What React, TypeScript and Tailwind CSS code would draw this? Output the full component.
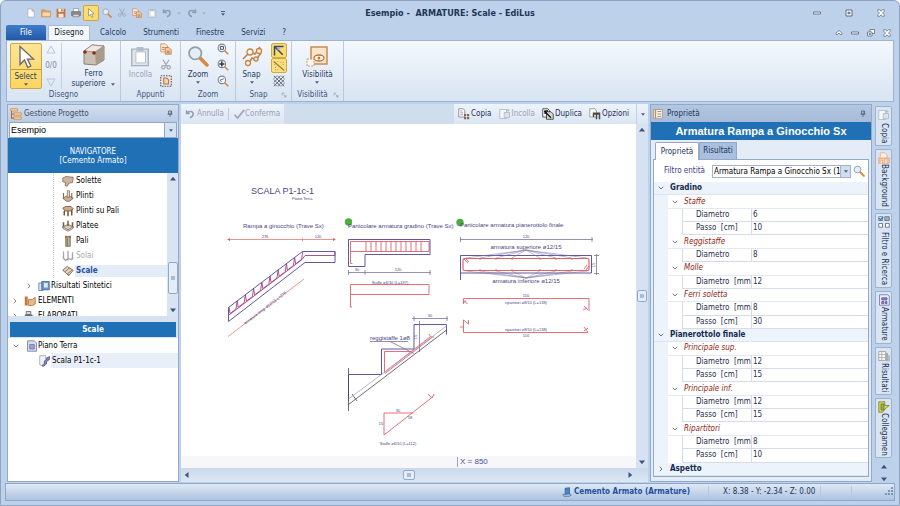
import type { ReactNode } from "react";
import { ChevronDown, ChevronRight } from "lucide-react";

const menuTabs = ["Calcolo", "Strumenti", "Finestre", "Servizi", "?"];

interface TreeNode { label: string; icon: string; muted?: boolean; selected?: boolean }

const elements: TreeNode[] = [
  { label: "Solette", icon: "slab" },
  { label: "Plinti", icon: "footing" },
  { label: "Plinti su Pali", icon: "piles" },
  { label: "Platee", icon: "raft" },
  { label: "Pali", icon: "pile" },
  { label: "Solai", icon: "floor", muted: true },
  { label: "Scale", icon: "stairs", selected: true },
];

interface Row { kind: "section" | "group" | "value"; label: string; value?: string; closed?: boolean }

const rows: Row[] = [
  { kind: "section", label: "Gradino" },
  { kind: "group", label: "Staffe" },
  { kind: "value", label: "Diametro", value: "6" },
  { kind: "value", label: "Passo  [cm]", value: "10" },
  { kind: "group", label: "Reggistaffe" },
  { kind: "value", label: "Diametro", value: "8" },
  { kind: "group", label: "Molle" },
  { kind: "value", label: "Diametro  [mm", value: "12" },
  { kind: "group", label: "Ferri soletta" },
  { kind: "value", label: "Diametro  [mm", value: "8" },
  { kind: "value", label: "Passo  [cm]", value: "30" },
  { kind: "section", label: "Pianerottolo finale" },
  { kind: "group", label: "Principale sup." },
  { kind: "value", label: "Diametro  [mm", value: "12" },
  { kind: "value", label: "Passo  [cm]", value: "15" },
  { kind: "group", label: "Principale inf." },
  { kind: "value", label: "Diametro  [mm", value: "12" },
  { kind: "value", label: "Passo  [cm]", value: "15" },
  { kind: "group", label: "Ripartitori" },
  { kind: "value", label: "Diametro  [mm", value: "8" },
  { kind: "value", label: "Passo  [cm]", value: "10" },
  { kind: "section", label: "Aspetto", closed: true },
];

const glyphs: Record<string, ReactNode> = {
  page: <path d="M3 1.5h6.5L13 5v9.5H3zM9.5 1.5V5H13" fill="#fff" stroke="#9aa5b5" />,
  folder: <><path d="M1 3h5l1.5 2H15v9H1z" fill="#e8a25c" stroke="#c07a35" /><path d="M3 7h12l-1 6H2z" fill="#fbd7a4" /></>,
  save: <><path d="M1 1h14v14H1z" fill="#c8743c" /><path d="M4 1h8v5H4z" fill="#fff" /><path d="M4 9h8v6H4z" fill="#f6e7da" /><path d="M8.5 2h2v3h-2z" fill="#7c4a2c" /></>,
  print: <><path d="M4 1h8v5H4z" fill="#fff" stroke="#888" /><path d="M1 6h14v6H1z" fill="#8e8e90" stroke="#5b5d62" /><path d="M3 10h10v4H3z" fill="#d5d8dc" stroke="#6b6d72" /></>,
  cursor: <path d="M4 1v12l3-3 2.2 5 2-1-2.2-4.6H13z" fill="#fff" stroke="#6e6a68" strokeWidth=".9" />,
  lens: <><path d="M9 9l5.5 5.5" stroke="#d88a3c" strokeWidth="2.6" strokeLinecap="round" /><circle cx="6" cy="6" r="4.500" fill="#e3eef7" stroke="#95a0ac" strokeWidth="1.3" /></>,
  cut: <path d="M4 1l5.5 9M12 1L6.5 10M6.3 10a2.2 2.2 0 1 0 .1.2M9.7 10a2.2 2.2 0 1 1-.1.2" fill="none" stroke="#9fa9b7" strokeWidth="1.6" />,
  copy: <><path d="M1 1h6l3 3v8H1z" fill="#fbe6d5" stroke="#c98a5b" /><path d="M7 6h5l3 3v6H7z" fill="#f5c9a2" stroke="#b8703c" /><path d="M3 6h3M3 8.5h3M9 11h4M9 13h4" stroke="#a35d31" /></>,
  paste: <><path d="M2 3h12v12H2z" fill="#dfe5ee" stroke="#a6b0bf" /><path d="M5 5h7v8H5z" fill="#fff" stroke="#b3bcc9" strokeWidth=".7" /><path d="M5.5 1.5h5v3h-5z" fill="#b4bdca" /></>,
  undo: <path d="M2.5 2v5h5M3 6.5C6 3 13 3 13 8c0 3-2 5-5 6" fill="none" stroke="#8f9db1" strokeWidth="2.4" />,
  redo: <path d="M13.5 2v5h-5M13 6.5C10 3 3 3 3 8c0 3 2 5 5 6" fill="none" stroke="#8f9db1" strokeWidth="2.4" />,
  check: <path d="M2 9l4 4.5L15 2.5" fill="none" stroke="#a2aab6" strokeWidth="2.4" />,
  select: <><path d="M1 1h14v14H1z" fill="none" stroke="#5d5044" strokeWidth="1.5" strokeDasharray="2 1.5" /><path d="M5 4h4l2.5 2.5V12H5z" fill="#f7d3ad" stroke="#b8703c" strokeWidth="1.4" /></>,
  zoomWin: <><path d="M10 10l5 5" stroke="#d8863c" strokeWidth="2.2" /><circle cx="6.5" cy="6.5" r="5" fill="#f3f6fa" stroke="#7d8794" strokeWidth="1.4" /><path d="M4.5 4.5h4v4h-4z" fill="none" stroke="#444c58" strokeWidth="1.3" /></>,
  zoomAll: <><path d="M10 10l5 5" stroke="#d8863c" strokeWidth="2.2" /><circle cx="6.5" cy="6.5" r="5" fill="#f3f6fa" stroke="#7d8794" strokeWidth="1.4" /><path d="M6.5 3v7M3 6.5h7" stroke="#333b47" strokeWidth="2" /></>,
  zoomPrev: <><path d="M10 10l5 5" stroke="#d8863c" strokeWidth="2.2" /><circle cx="6.5" cy="6.5" r="5" fill="#f3f6fa" stroke="#7d8794" strokeWidth="1.4" /><path d="M4 7l5-2M4 7l2 2" stroke="#5f6a7a" strokeWidth="1.3" fill="none" /></>,
  snapEnd: <><path d="M2 14V2h12M2 2l11 11" fill="none" stroke="#3a4d70" strokeWidth="2" /><path d="M6 2l4 3-4 2z" fill="#9bb5d8" /></>,
  snapMid: <><path d="M1 2l14 12" stroke="#8c7a3c" strokeWidth="1.4" /><path d="M10 3h1M13 6h1M3 10h1M6 13h1M6 2h1M2 6h1M13 3h1M3 13h1" stroke="#8c7a3c" strokeWidth="1.2" /></>,
  snapGrid: <path d="M1 1l14 14M6 1l9 9M11 1l4 4M1 6l9 9M1 11l4 4M15 1L1 15M10 1L1 10M5 1L1 5M15 6l-9 9M15 11l-4 4" stroke="#5c6675" strokeWidth="1.2" />,
  project: <><path d="M1 1h9v3H1zM5 6.5h10v3H5zM5 12h10v3H5z" fill="#fbd5aa" stroke="#cf8440" /><path d="M2 4v9.5h3M2 8h3" fill="none" stroke="#b16c31" strokeWidth="1.4" /></>,
  slab: <path d="M1 4l4-2 10 1-1 7-5 1-2 4-3-1 1-4-4-1z" fill="#cbb69d" stroke="#7b6550" />,
  footing: <><path d="M1 11l5-3h4l5 3-5 4H6z" fill="#c9b297" stroke="#6f5a45" /><path d="M7 1h3v9H7z" fill="#ddd0c0" stroke="#8b7560" /><path d="M2 4v7M13 4v7" stroke="#8a6a48" strokeWidth="1.5" /></>,
  piles: <><path d="M1 4l4-2h7l3 3-3 3H4z" fill="#cfa98a" stroke="#70492e" /><path d="M3 8v6M8 8v7M13 6v8" stroke="#7a5439" strokeWidth="2" /></>,
  raft: <><path d="M1 9l7 4 7-4-7-3z" fill="#dbcdb8" stroke="#6c5a48" /><path d="M2 3v6M8 1v7M14 3v6" stroke="#765c44" strokeWidth="2" /><path d="M1 9v2l7 4 7-4V9" fill="none" stroke="#6c5a48" /></>,
  pile: <><path d="M5 2h6v13H5z" fill="#b7b295" stroke="#60583e" /><path d="M4 1h3v3H4zM9 1h3v3H9z" fill="#b26b45" /><path d="M7 4v11" stroke="#827b5e" strokeWidth="1.5" /></>,
  floor: <path d="M2 2v10M8 1v13M14 3v10M1 10l4 4 3-3 4 2 3-3" fill="none" stroke="#a8a8a8" strokeWidth="1.8" />,
  stairs: <><path d="M1 7l6-5 8 5-6 7z" fill="#e3d6c2" stroke="#77624c" strokeWidth="1.2" /><path d="M4 9l6-5M7 12l6-5M9 14v-2" stroke="#77624c" strokeWidth="1" /></>,
  results: <><path d="M1 4h6v10H1z" fill="#dfe6ef" stroke="#63738a" /><path d="M5 2h10v11H5z" fill="#6c9bd2" stroke="#2f5c94" /><path d="M8 4h5v6H8z" fill="#dcebfa" /></>,
  shapes: <><path d="M1 2h4v12H1z" fill="#c9793f" /><path d="M6 6h5l4-3v9l-4 2H6z" fill="#e8b888" stroke="#b26a36" /></>,
  docs: <><path d="M1 6h10v6H1z" fill="#6a6d75" /><path d="M3 2h6v4H3z" fill="#d6dae0" stroke="#555" /><path d="M9 8h4l2 2v5H9z" fill="#fff" stroke="#666" /></>,
  floorPlan: <><path d="M2 1h9l3 3v11H2z" fill="#d6dcec" stroke="#67739a" /><path d="M5 6h6v6H5z" fill="#9aa6cb" stroke="#67739a" /></>,
  stairItem: <><path d="M1 1h8v10l-4 4-4-2z" fill="#f5f6fb" stroke="#8f96b4" /><path d="M4 14l3-3V8l3-2V4l4-2v4l-4 3v3l-4 3z" fill="#7e80bb" stroke="#55568f" /></>,
  copyDark: <><path d="M1 1h6l2 2v9H1z" fill="#fff" stroke="#777" /><path d="M3 4h3M3 6.5h4M3 9h4" stroke="#888" /><path d="M8 8h3v3H8zM12 8h3v3h-3zM8 12h3v3H8zM12 12h3v3h-3z" fill="#826b5e" /></>,
  pasteGray: <><path d="M1 2h9v12H1z" fill="#f5f7fa" stroke="#a9b1bd" /><path d="M7 6h7v7H7z" fill="#dde2ea" stroke="#a9b1bd" /><path d="M12 1v4M10 3h4" stroke="#a9b1bd" /></>,
  duplicate: <><path d="M1 1h7l2 3v8H1z" fill="#fff" stroke="#222" /><path d="M6 5h6l3 3v7H6z" fill="#d8d8d8" stroke="#222" /><path d="M3 4l9 9M4 8V4h4" fill="none" stroke="#111" strokeWidth="1.7" /></>,
  options: <><path d="M1 1h7l2 3v8H1z" fill="#fff" stroke="#888" /><path d="M5 6h10v3H5zM9 9h2v6H9zM13 9h2v6h-2zM5 9h2v3H5z" fill="#504842" /></>,
  propList: <><path d="M1 1h14v14H1z" fill="#fdf1df" stroke="#9a8468" /><path d="M4 1v14" stroke="#c58d4b" strokeWidth="2" /><path d="M7 4h6M7 8h6M7 12h6" stroke="#8a8a8a" strokeWidth="1.4" /></>,
  background: <><path d="M1 8h14v7H1z" fill="#f7cdb0" stroke="#df9b70" /><path d="M3 15v-4h3v4M9 15V9h3v6M3 1h6l3 3v4H3z" fill="#fdf0e7" stroke="#e0a57e" /></>,
  filter: <><path d="M1 1h5v5H1zM1 10h5v5H1zM10 10h5v5h-5z" fill="#fff" stroke="#555e6c" /><path d="M1.5 3l2 2L7 1" fill="none" stroke="#2b7cb8" strokeWidth="1.6" /><path d="M9 1h6v5H9z" fill="#9db2cb" stroke="#556377" /></>,
  rebar: <><path d="M2 1h11l2 2v12H2z" fill="#eeecfa" stroke="#6c69ab" /><path d="M5 5h7v3H5zM5 10h3v3H5zM10 10h2v3h-2z" fill="#8a86c6" stroke="#5a559c" /></>,
  table: <><path d="M1 2h9v12H1z" fill="#f6f6f2" stroke="#9a9a8d" /><path d="M1 6h9M1 10h9M5 2v12" stroke="#aaa" /><path d="M11 4h2v11h-2zM14 7h1.5v8H14z" fill="#8f9aa5" /></>,
  link: <><path d="M1 1h8v5h6l-5 4-4 5H1z" fill="#e6d64a" stroke="#6f7630" /><path d="M4 4h4v8H4z" fill="#8cb457" stroke="#56752e" /></>,
  pin: <path d="M5 2h6v6H5zM3 8.5h10M8 9v5M10 2v6" fill="none" stroke="#51617e" strokeWidth="1.6" />,
  min: <path d="M1 6h14v4H1z" fill="#fff" stroke="#5d6a80" strokeWidth="1.8" />,
  max: <path d="M2 2h12v12H2zM6 6.5h4v3H6z" fill="#fff" stroke="#5d6a80" strokeWidth="2" />,
  restore: <><path d="M6 1h9v8H6z" fill="#fff" stroke="#5d6a80" strokeWidth="1.6" /><path d="M1 6h9v8H1zM4 9h3v2H4z" fill="#fff" stroke="#5d6a80" strokeWidth="1.6" /></>,
  close: <path d="M1.5 1.5h4L8 4.5l2.500-3h4v3L11 8l3.5 3.5v3h-4L8 11.500l-2.500 3h-4v-3L5 8 1.500 4.500z" fill="#fff" stroke="#5d6a80" strokeWidth="1.5" />,
  up: <path d="M2 8l6-5 6 5v3h-3l-3-3-3 3H2z" fill="#fff" stroke="#5d6a80" strokeWidth="1.5" />,
  building: <><path d="M5 2l7-1v11l-7 2z" fill="#4a83c4" stroke="#234f87" /><path d="M1 12l11-1 3 2-4 2H3z" fill="#a8c4e4" stroke="#3b659a" /></>,
  dialog: <path d="M3 9V3h6M7 7l6 6M13 8v5H8" fill="none" stroke="#8796ae" strokeWidth="1.8" />,
};

function Glyph({ name, className = "h-2.5 w-2.5" }: { name: string; className?: string }) {
  return <svg viewBox="0 0 16 16" aria-hidden="true" className={`shrink-0 ${className}`}>{glyphs[name]}</svg>;
}

function Caret({ className = "text-[#4b5f80]" }: { className?: string }) {
  return <svg viewBox="0 0 6 4" aria-hidden="true" className={`h-[3px] w-1 shrink-0 ${className}`}><path d="M0 0h6L3 4z" fill="currentColor" /></svg>;
}

function Arrow({ dir, label }: { dir: "up" | "down" | "left" | "right"; label: string }) {
  const d = { up: "M0 6h8L4 1z", down: "M0 2h8L4 7z", left: "M6 0v8L1 4z", right: "M2 0v8l5-4z" }[dir];
  return (
    <button aria-label={label} className="flex h-3 w-3 shrink-0 items-center justify-center">
      <svg viewBox="0 0 8 8" className="h-1.5 w-1.5"><path d={d} fill="#3f5478" /></svg>
    </button>
  );
}

function TitleBar() {
  const quick = ["page", "folder", "save", "print", "cursor", "lens", "cut", "copy", "paste", "undo", "redo"];
  return (
    <header className="relative flex h-6 items-center pr-1.5 pl-[18px]">
      <div className="flex items-center">
        {quick.map((name) => (
          <div key={name} className="flex items-center">
            <button
              aria-label={name}
              className={name === "cursor"
                ? "flex h-4 w-4 items-center justify-center rounded-xs border border-[#d0a540] bg-[#fbdc70]"
                : "flex h-4 w-[15px] items-center justify-center"}
            >
              <Glyph name={name} />
            </button>
            {(name === "undo" || name === "redo") && <Caret className="mx-[3px] text-[#a4b3ca]" />}
          </div>
        ))}
        <button aria-label="Personalizza" className="ml-3 flex flex-col items-center gap-px">
          <span className="h-px w-1 bg-[#4b5f80]" />
          <Caret />
        </button>
      </div>
      <h1 className="absolute inset-x-0 text-center text-[9px] font-bold whitespace-pre text-[#1d3557]">Esempio -  ARMATURE: Scale - EdiLus</h1>
      <div className="ml-auto flex items-center gap-6">
        <button aria-label="Riduci"><Glyph name="min" className="h-2 w-2" /></button>
        <button aria-label="Ingrandisci"><Glyph name="max" className="h-2 w-2" /></button>
        <button aria-label="Chiudi" className="mr-1"><Glyph name="close" className="h-2 w-2" /></button>
      </div>
    </header>
  );
}

function MenuBar() {
  return (
    <nav className="flex h-[15px] items-stretch pr-1">
      <button className="ml-px w-10 rounded-t-xs bg-linear-to-b from-[#3f7cc8] to-[#2359a8] text-white">File</button>
      <button className="ml-0.5 w-[42px] rounded-t-xs border border-b-0 border-[#a9bdd8] bg-[#f4f8fd] text-[#101d33]">Disegno</button>
      <div className="flex items-center gap-[17px] pl-2.5 text-[#1e3a63]">
        {menuTabs.map((tab) => <button key={tab}>{tab}</button>)}
      </div>
      <div className="ml-auto flex items-center gap-2">
        <button aria-label="Comprimi"><Glyph name="up" className="h-2 w-2" /></button>
        <button aria-label="Riduci finestra"><Glyph name="min" className="h-2 w-2" /></button>
        <button aria-label="Ripristina finestra"><Glyph name="restore" className="h-2 w-2" /></button>
        <button aria-label="Chiudi finestra"><Glyph name="close" className="h-2 w-2" /></button>
      </div>
    </nav>
  );
}

function RibbonGroup({ title, width, dialog, children }: { title: string; width: string; dialog?: boolean; children: ReactNode }) {
  return (
    <section className={`flex flex-col border-r border-[#b9c9de] ${width}`}>
      <div className="flex min-h-0 flex-1 justify-center gap-2 pt-0.5">{children}</div>
      <div className="flex h-3 items-center justify-center text-[#3b5680]">
        <span className={dialog ? "ml-auto" : ""}>{title}</span>
        {dialog && <button aria-label={`Opzioni ${title}`} className="mr-1 ml-auto"><Glyph name="dialog" className="h-1.5 w-1.5" /></button>}
      </div>
    </section>
  );
}

function Ribbon() {
  return (
    <div className="mx-px flex h-[62px] shrink-0 border border-[#9fb3ce] bg-linear-to-b from-[#f4f8fd] to-[#d8e4f2] text-[#1e3a63]">
      <RibbonGroup title="Disegno" width="w-[114px]">
        <button className="flex h-[46px] w-8 flex-col items-center rounded-xs border border-[#cfa746] bg-linear-to-b from-[#fde594] to-[#fbd55e]">
          <Glyph name="cursor" className="mt-px h-6 w-6" />
          <span className="flex w-full flex-1 flex-col items-center border-t border-[#c09a3e] leading-[13px]">Select<Caret /></span>
        </button>
        <div className="-ml-1 flex w-4 flex-col items-center justify-between border-r border-[#c3d0e2] py-0.5 pr-1 text-[#7b8ca8]">
          <svg viewBox="0 0 10 9" className="h-[9px] w-2.5"><path d="M1 8h8L5 1z" fill="none" stroke="#b9c4d4" /></svg>
          <span>0/0</span>
          <svg viewBox="0 0 10 9" className="h-[9px] w-2.5"><path d="M1 1h8L5 8z" fill="none" stroke="#b9c4d4" /></svg>
        </div>
        <button className="flex w-12 flex-col items-center">
          <svg viewBox="0 0 24 24" className="h-6 w-6 shrink-0">
            <path d="M2 8l8-6 12 1v14l-8 5-12-1z" fill="#cbbfb2" stroke="#8e8074" />
            <path d="M13 9l9-6v14l-8 5z" fill="#a89a8c" />
            <path d="M2 8l8-6 12 1-9 6z" fill="#efe8e0" stroke="#8e8074" strokeWidth=".7" />
            <circle cx="3" cy="9" r="1.8" fill="#8d2a20" /><circle cx="12" cy="10" r="1.8" fill="#8d2a20" />
          </svg>
          <span className="mt-0.5 leading-[10px]">Ferro</span>
          <span className="flex items-center gap-1.5 leading-[10px]">superiore<Caret /></span>
        </button>
      </RibbonGroup>
      <RibbonGroup title="Appunti" width="w-[60px]">
        <button className="flex flex-col items-center text-[#98a5b8]">
          <Glyph name="paste" className="mt-0.5 h-[22px] w-[22px]" />
          <span className="mt-0.5">Incolla</span>
        </button>
        <div className="flex flex-col justify-between pb-0.5">
          <button aria-label="Copia elementi" className="h-3"><Glyph name="copy" className="h-3 w-3" /></button>
          <button aria-label="Taglia elementi" className="h-3"><Glyph name="cut" className="h-3 w-3" /></button>
          <button aria-label="Seleziona area" className="h-3"><Glyph name="select" className="h-3 w-3" /></button>
        </div>
      </RibbonGroup>
      <RibbonGroup title="Zoom" width="w-[55px]">
        <button className="flex flex-col items-center">
          <Glyph name="lens" className="mt-0.5 h-[22px] w-[22px]" />
          <span className="mt-0.5">Zoom</span>
          <Caret />
        </button>
        <div className="flex flex-col justify-between pb-0.5">
          <button aria-label="Zoom finestra" className="h-3"><Glyph name="zoomWin" className="h-3 w-3" /></button>
          <button aria-label="Zoom estensione" className="h-3"><Glyph name="zoomAll" className="h-3 w-3" /></button>
          <button aria-label="Zoom precedente" className="h-3"><Glyph name="zoomPrev" className="h-3 w-3" /></button>
        </div>
      </RibbonGroup>
      <RibbonGroup title="Snap" width="w-[56px]" dialog>
        <button className="flex flex-col items-center">
          <svg viewBox="0 0 22 22" className="mt-0.5 h-[22px] w-[22px]">
            <path d="M2 14L9 7l5 2 5-7M7 19l4-6 4 2 5-7" fill="none" stroke="#b98152" strokeWidth="1.5" />
            <g fill="#fff3df" stroke="#c58342" strokeWidth="1.3"><circle cx="9" cy="7" r="3" /><circle cx="18" cy="6" r="2.5" /><circle cx="7" cy="18" r="2.5" /><circle cx="15" cy="14" r="2" /></g>
          </svg>
          <span className="mt-0.5">Snap</span>
          <Caret />
        </button>
        <div className="flex flex-col items-center">
          <button aria-label="Snap estremi" className="flex h-[15px] w-4 items-center justify-center rounded-xs border border-[#d1a943] bg-[#fbdb6b]"><Glyph name="snapEnd" className="h-3 w-3" /></button>
          <button aria-label="Snap medio" className="flex h-[15px] w-4 items-center justify-center rounded-xs border border-[#d1a943] bg-[#fbe07d]"><Glyph name="snapMid" className="h-3 w-3" /></button>
          <button aria-label="Snap griglia" className="flex h-4 items-center"><Glyph name="snapGrid" className="h-3 w-3" /></button>
        </div>
      </RibbonGroup>
      <RibbonGroup title="Visibilità" width="w-[52px]" dialog>
        <button className="flex flex-col items-center">
          <svg viewBox="0 0 22 22" className="mt-0.5 h-[22px] w-[22px]">
            <path d="M5 2h16v17H5z" fill="#fbe4cd" stroke="#c98a52" strokeWidth="1.5" />
            <ellipse cx="13" cy="13" rx="5" ry="3" fill="#fff" stroke="#bd7434" strokeWidth="1.3" />
            <circle cx="13" cy="13" r="1.5" fill="#bd7434" />
            <path d="M1 14h7v7H1z" fill="#fdf5ec" stroke="#b9a184" strokeDasharray="2 1" />
          </svg>
          <span className="mt-0.5">Visibilità</span>
          <Caret />
        </button>
      </RibbonGroup>
    </div>
  );
}

function ProjectPanel() {
  return (
    <aside className="flex w-[172px] shrink-0 flex-col border border-[#93a9c7] bg-[#d5e2f1]">
      <div className="flex h-[17px] shrink-0 items-center gap-0.5 bg-linear-to-b from-[#d3dfef] to-[#b9cbe3] px-0.5 text-[#3d4f6d]">
        <Glyph name="project" className="h-3 w-3" />
        <h2>Gestione Progetto</h2>
        <button aria-label="Blocca pannello" className="ml-auto pr-0.5"><Glyph name="pin" className="h-2 w-2" /></button>
      </div>
      <div className="relative mx-px h-4 shrink-0 border border-[#8fa6c5] bg-white">
        <select aria-label="Progetto" className="h-full w-full appearance-none pl-px font-['Liberation_Sans',sans-serif] text-[9px] text-black">
          <option>Esempio</option>
        </select>
        <span className="pointer-events-none absolute inset-y-0 right-0 flex w-3 items-center justify-center border-l border-[#8fa6c5] bg-[#d5e2f1]"><Caret /></span>
      </div>
      <div className="flex h-[35px] shrink-0 flex-col items-center justify-center bg-[#2070b5] leading-[9px] text-white">
        <span>NAVIGATORE</span>
        <span>[Cemento Armato]</span>
      </div>
      <div className="flex h-[143px] shrink-0 bg-white">
        <ul className="flex flex-1 flex-col overflow-hidden text-black">
          {elements.map((node) => (
            <li key={node.label} className="ml-[45px] flex h-[15px] shrink-0 items-center border-l border-dotted border-[#c9ced6] pl-2">
              <Glyph name={node.icon} className="h-3 w-3" />
              <a
                href="#"
                className={node.selected
                  ? "ml-px flex h-3 flex-1 items-center bg-[#e3ecf7] pl-px font-bold text-[#1f4f9f]"
                  : node.muted ? "ml-0.5 text-[#a9a9a9]" : "ml-0.5"}
              >
                {node.label}
              </a>
            </li>
          ))}
          <li className="flex h-[15px] shrink-0 items-center gap-px pl-[17px]">
            <ChevronRight className="mr-1 h-2 w-2 text-[#444]" />
            <Glyph name="results" className="h-3 w-3" />
            <a href="#">Risultati Sintetici</a>
          </li>
          <li className="flex h-[15px] shrink-0 items-center gap-px pl-[3px]">
            <ChevronRight className="mr-1 h-2 w-2 text-[#444]" />
            <Glyph name="shapes" className="h-3 w-3" />
            <a href="#" className="ml-px">ELEMENTI</a>
          </li>
          <li className="flex h-[15px] shrink-0 items-center gap-px pl-[3px]">
            <ChevronRight className="mr-1 h-2 w-2 text-[#444]" />
            <Glyph name="docs" className="h-3 w-3" />
            <a href="#" className="ml-px">ELABORATI</a>
          </li>
        </ul>
        <div className="flex w-[11px] shrink-0 flex-col items-center bg-[#d8e4f2]">
          <Arrow dir="up" label="Scorri su" />
          <div className="mt-auto flex h-8 w-[10px] items-center justify-center rounded-xs border border-[#92a9c9] bg-[#e4edf8]"><span className="h-1 w-1 bg-[#a9bbd5]" /></div>
          <span className="h-2.5" />
          <Arrow dir="down" label="Scorri giù" />
        </div>
      </div>
      <h2 className="mx-0.5 mt-1.5 h-[15px] shrink-0 bg-[#2070b5] text-center leading-[15px] font-bold text-white">Scale</h2>
      <ul className="mt-px flex-1 bg-white text-black">
        <li className="flex h-[15px] items-center pl-1">
          <ChevronDown className="mr-1.5 h-2 w-2 text-[#444]" />
          <Glyph name="floorPlan" className="h-3 w-3" />
          <a href="#">Piano Terra</a>
        </li>
        <li className="flex h-[15px] items-center pl-[31px]">
          <Glyph name="stairItem" className="h-3 w-3" />
          <a href="#" className="flex h-[15px] flex-1 items-center bg-[#e8eff9] pl-px">Scala P1-1c-1</a>
        </li>
      </ul>
    </aside>
  );
}

function Drawing() {
  const rungs = Array.from({ length: 12 }, (_, i) => 366 + i * 5);
  const fan = [466, 480, 496, 512, 540, 556, 572, 587];
  const web = Array.from({ length: 9 }, (_, i) => {
    const x = 229 + i * 8.2;
    const y = 307 - i * 6.2;
    return `L${x + 1} ${y + 6.5}L${x + 7} ${y + 2}L${x + 8.2} ${y - 6.2}`;
  }).join("");
  return (
    <svg viewBox="181 124 454 332" preserveAspectRatio="xMinYMin meet" role="img" aria-label="Scala P1-1c-1" className="min-h-0 w-full flex-1 bg-white font-['Liberation_Sans',sans-serif]" fill="none">
      <circle cx="348.5" cy="222" r="3.7" fill="#4cae3c" />
      <circle cx="460" cy="222.5" r="3.7" fill="#4cae3c" />
      <g stroke="#e2606a" strokeWidth=".9">
        <path d="M228 239.5h107M302.5 238v3M228 336.5l76-57.5" stroke="#e88a83" />
        <path d="M227 239.5l3-1.5v3zM336 239.500l-3-1.5v3z" fill="#e2606a" stroke="none" />
        <path d="M350.5 263.5h2M350.5 263.500v-22H429v10h-78.5" />
        {rungs.map((x) => <path key={x} d={`M${x} 241.5v10`} />)}
        <path d="M352 307h-1.5v-22.500H429v10h-78.5" />
        <rect x="463" y="258.5" width="126" height="12" rx="1.5" strokeWidth="1.2" />
        <path d="M464 259l4 4M466 259l3 3M587 265l-3 4M589 266l-3 4M480 258v2M496 258v2M512 258v2M540 258v2M556 258v2M572 258v2M480 269v2M496 269v2M512 269v2M540 269v2M556 269v2M572 269v2" />
        <path d="M463.5 304v-5.5H589V311M463.5 300l4 4M463 303l3-2M584 306l4 4M583 310l4-2" />
        <path d="M463.5 320v12.5H588M463.5 320l5 4v-4M460 327h3M584 327l4 5M584 331l4-3" />
        <path d="M384.5 373v-21.5h27M385 373.5l47-36M386 371l44-34M429 334l2 3h3" />
        <path d="M413 413h-29v22l48.5-38M428 394l4 4 2-4" />
      </g>
      <g stroke="#a13d82" strokeWidth=".9">
        <path d={`M229 307${web}`} />
        <path d="M229 315L302 259.500 305 255.500h30M303 251.500h32v4" />
      </g>
      <g stroke="#5e58a5" strokeWidth="1">
        <path d="M228.5 321.5v-14l74-56H335v11h-30z" />
        <path d="M348.5 239.5H430v15h-65v12h-16.500z" />
        <path d="M460.5 280v-24.5h131v17.5h-131" />
        <path d="M348.5 401v-26.5h33V349H414v-24.5h32.500v10" />
      </g>
      <g stroke="#83709f" strokeWidth=".8">
        <path d="M348 272.5h83M348.500 270v5M365 270v5M430 270v5M460 239.500h133M460.500 237v5M592 237v5M596.500 254v21M594 255.500h5M594 273.500h5M412 318.500h36M414 316v5M447 316v5M419.500 321v31M370 341.500h38M390 341.500l24 12" />
        <g strokeWidth=".5">{fan.map((x) => <path key={x} d={`M526 250L${x} 258M526 278L${x} 271`} />)}</g>
      </g>
      <path d="M348.5 404.5L446.5 330M348.500 368v43M352 394l5 7" stroke="#494554" strokeWidth=".8" />
      <path d="M348.5 399L446.5 326" stroke="#a6a2b6" strokeWidth=".8" />
      <g fill="#4a4484">
        <text x="251" y="194" fontSize="9">SCALA P1-1c-1</text>
        <text x="292" y="200" fontSize="4">Piano Terra</text>
        <g fontSize="6">
          <text x="243" y="228">Rampa a ginocchio (Trave Sx)</text>
          <text x="348" y="228">Particolare armatura gradino (Trave Sx)</text>
          <text x="460" y="227">Particolare armatura pianerottolo finale</text>
          <text x="526" y="249" textAnchor="middle">armatura superiore ø12/15</text>
          <text x="526" y="283" textAnchor="middle">armatura inferiore ø12/15</text>
          <text x="370" y="340">reggistaffe 1ø8</text>
        </g>
        <g fontSize="4" textAnchor="middle">
          <text x="265" y="238">276</text>
          <text x="318" y="238">120</text>
          <text x="357" y="271">30</text>
          <text x="398" y="271">120</text>
          <text x="390" y="284">Staffe ø6/10 (L=197)</text>
          <text x="526" y="238">120</text>
          <text x="526" y="297">110</text>
          <text x="526" y="304">ripartitori ø8/10 (L=138)</text>
          <text x="526" y="331">ripartitori ø8/10 (L=138)</text>
          <text x="526" y="337">110</text>
          <text x="430" y="317">30</text>
          <text x="398" y="412">30</text>
          <text x="381" y="425">15</text>
          <text x="410" y="419">58</text>
          <text x="398" y="445">Staffe ø6/10 (L=112)</text>
          <text x="595" y="265" transform="rotate(-90 595 265)">15</text>
          <text x="417" y="337" transform="rotate(-90 417 337)">15</text>
          <text x="266" y="309" transform="rotate(-37 266 309)">armatura long. ø12/15 L=278</text>
        </g>
      </g>
    </svg>
  );
}

function Workspace() {
  return (
    <main className="flex min-w-0 flex-1 flex-col">
      <div className="flex h-5 shrink-0 items-stretch justify-between bg-[#cfdded]">
        <div className="flex items-center bg-linear-to-b from-[#edf3fa] to-[#dbe6f3] px-1 text-[#98a2b2]">
          <button className="flex items-center gap-0.5"><Glyph name="undo" />Annulla</button>
          <button className="ml-1 flex items-center border-l border-[#bccade] pl-1"><Glyph name="check" className="h-3 w-3" />Conferma</button>
        </div>
        <div className="flex items-center gap-[7px] bg-linear-to-b from-[#edf3fa] to-[#dbe6f3] pl-1 text-[#1e2f5e]">
          <button className="flex items-center gap-px"><Glyph name="copyDark" className="h-3 w-3" />Copia</button>
          <button className="flex items-center gap-px text-[#98a2b2]"><Glyph name="pasteGray" className="h-3 w-3" />Incolla</button>
          <button className="flex items-center gap-px"><Glyph name="duplicate" className="h-3 w-3" />Duplica</button>
          <button className="flex items-center gap-px"><Glyph name="options" className="h-3 w-3" />Opzioni</button>
          <button aria-label="Altro" className="flex h-full w-3 items-center justify-center border-l border-[#c2cfe1]"><Caret /></button>
        </div>
      </div>
      <div className="flex min-h-0 flex-1">
        <div className="flex min-w-0 flex-1 flex-col bg-white">
          <Drawing />
          <div className="flex h-3 shrink-0 items-center bg-[#f7f7fa] pl-[276px] font-['Liberation_Sans',sans-serif] text-[#4a4f99]">
            <output className="border-l border-[#9a9ecb] pl-0.5 leading-[10px]">X = 850</output>
          </div>
        </div>
        <div className="flex w-3 shrink-0 flex-col items-center justify-between bg-[#d5e2f1]">
          <Arrow dir="up" label="Scorri disegno su" />
          <div className="flex h-3 w-2.5 items-center justify-center rounded-xs border border-[#92a9c9] bg-[#e4edf8]"><span className="h-1 w-1 bg-[#a9bbd5]" /></div>
          <Arrow dir="down" label="Scorri disegno giù" />
        </div>
      </div>
      <div className="flex h-3.5 shrink-0 items-center justify-between bg-linear-to-b from-[#c9d9ec] to-[#dce7f4] pr-3">
        <Arrow dir="left" label="Scorri disegno a sinistra" />
        <div className="flex h-2.5 w-3 items-center justify-center rounded-xs border border-[#92a9c9] bg-[#e4edf8]"><span className="h-1 w-1 bg-[#a9bbd5]" /></div>
        <Arrow dir="right" label="Scorri disegno a destra" />
      </div>
    </main>
  );
}

function PropertyRow({ row }: { row: Row }) {
  if (row.kind === "section") {
    return (
      <tr className="bg-[#edf3fa]">
        <td className="border-b border-[#dbe4ef]">
          {row.closed ? <ChevronRight className="mx-auto h-2 w-2 text-[#333]" /> : <ChevronDown className="mx-auto h-2 w-2 text-[#333]" />}
        </td>
        <th colSpan={3} scope="colgroup" className="border-b border-[#dbe4ef] pl-0.5 text-left font-bold text-[#14294f]">{row.label}</th>
      </tr>
    );
  }
  if (row.kind === "group") {
    return (
      <tr>
        <td className="bg-[#edf3fa]" />
        <td className="border-b border-[#e3e9f1]"><ChevronDown className="mx-auto h-2 w-2 text-[#333]" /></td>
        <th colSpan={2} scope="colgroup" className="border-b border-[#e3e9f1] pl-0.5 text-left font-normal text-[#8f2510] italic">{row.label}</th>
      </tr>
    );
  }
  return (
    <tr>
      <td className="bg-[#edf3fa]" />
      <td />
      <th scope="row" className="border-b border-l border-[#d3dce8] pl-[13px] text-left font-normal whitespace-pre text-[#26304d]">{row.label}</th>
      <td className="border-b border-l border-[#d3dce8]">
        <input aria-label={row.label} defaultValue={row.value} className="block h-2.5 w-full px-px text-[#26304d] outline-none" />
      </td>
    </tr>
  );
}

function PropertiesPanel() {
  return (
    <aside className="flex w-[222px] shrink-0 flex-col border border-[#93a9c7] bg-[#e3ecf7]">
      <div className="flex h-[17px] shrink-0 items-center gap-1 bg-linear-to-b from-[#b4c7e0] to-[#a5bbd9] px-0.5 text-[#1e3358]">
        <Glyph name="propList" />
        <h2>Proprietà</h2>
        <button aria-label="Blocca proprietà" className="ml-auto pr-0.5"><Glyph name="pin" className="h-2 w-2" /></button>
      </div>
      <h3 className="h-[18px] shrink-0 bg-[#2070b5] text-center font-['Liberation_Sans',sans-serif] text-[11px] leading-[18px] font-bold text-white">Armatura Rampa a Ginocchio Sx</h3>
      <div role="tablist" className="flex h-[19px] shrink-0 items-end pl-1 text-[#1e3358]">
        <button role="tab" aria-selected="true" className="z-10 -mb-px h-[18px] w-11 rounded-t-xs border border-b-0 border-[#93a9c7] bg-white">Proprietà</button>
        <button role="tab" aria-selected="false" className="h-[17px] w-[38px] border border-b-0 border-[#93a9c7] bg-[#a9c0df]">Risultati</button>
      </div>
      <div className="mx-0.5 mb-1 flex min-h-0 flex-1 flex-col border border-[#93a9c7] bg-white">
        <div className="flex h-[22px] shrink-0 items-center pl-2.5">
          <label htmlFor="entity" className="w-12 text-[#3b3b8f]">Filtro entità</label>
          <div className="relative h-[13px] w-[139px] border border-[#a3b5cd]">
            <select id="entity" className="h-full w-full appearance-none overflow-hidden pl-px pr-2.5 whitespace-nowrap text-black">
              <option>Armatura Rampa a Ginocchio Sx (1</option>
            </select>
            <span className="pointer-events-none absolute inset-y-0 right-0 flex w-2.5 items-center justify-center border-l border-[#a3b5cd] bg-[#cfdded]"><Caret /></span>
          </div>
          <button aria-label="Cerca" className="ml-0.5"><Glyph name="lens" className="h-3 w-3" /></button>
        </div>
        <div className="min-h-0 flex-1">
          <table className="h-full w-full table-fixed border-separate border-spacing-0 leading-[10px]">
            <colgroup><col className="w-3.5" /><col className="w-3.5" /><col className="w-[69px]" /><col /></colgroup>
            <tbody>{rows.map((row, i) => <PropertyRow key={i} row={row} />)}</tbody>
          </table>
        </div>
      </div>
    </aside>
  );
}

const sideTabs = [
  { label: "Copia", icon: "pasteGray", size: "h-10" },
  { label: "Background", icon: "background", size: "h-[61px]" },
  { label: "Filtro e Ricerca", icon: "filter", size: "h-[75px]" },
  { label: "Armature", icon: "rebar", size: "h-[53px]" },
  { label: "Risultati", icon: "table", size: "h-[48px]" },
  { label: "Collegamen", icon: "link", size: "h-[60px]" },
];

function SideStrip() {
  return (
    <nav className="flex w-[19px] shrink-0 flex-col items-center gap-[3px] pt-0.5">
      {sideTabs.map((tab) => (
        <button key={tab.label} className={`flex w-[17px] shrink-0 flex-col items-center justify-between rounded-r-xs border border-[#9db2cf] bg-[#d9e5f3] py-0.5 text-[#15294c] ${tab.size}`}>
          <Glyph name={tab.icon} className="h-3 w-3" />
          <span className="whitespace-nowrap [writing-mode:vertical-rl]">{tab.label}</span>
        </button>
      ))}
      <div className="flex flex-col">
        <Arrow dir="up" label="Schede precedenti" />
        <Arrow dir="down" label="Schede successive" />
      </div>
    </nav>
  );
}

export default function App() {
  return (
    <div className="flex h-screen flex-col overflow-hidden rounded-t-md border border-[#8ea3c0] bg-[#bed1ea] px-1 font-['DejaVu_Sans_Condensed','DejaVu_Sans',sans-serif] text-[8px] leading-[12px]">
      <TitleBar />
      <MenuBar />
      <Ribbon />
      <div className="flex min-h-0 flex-1 gap-0.5 px-0.5 pt-0.5 pb-px">
        <ProjectPanel />
        <Workspace />
        <PropertiesPanel />
        <SideStrip />
      </div>
      <footer className="mb-1 flex h-[18px] shrink-0 items-center border border-[#8ea6c8] bg-linear-to-b from-[#dfe9f5] to-[#adc3e0] text-[#1e3358]">
        <div className="ml-auto flex w-[146px] items-center gap-0.5 font-bold text-[#1f4f9f]">
          <Glyph name="building" />
          <span className="whitespace-nowrap">Cemento Armato (Armature)</span>
        </div>
        <span className="w-[112px] border-l border-[#b5c7df] pl-3.5">X: 8.38 - Y: -2.34 - Z: 0.00</span>
        <span className="h-3 w-8 border-x border-[#b5c7df]" />
        <svg viewBox="0 0 10 10" className="ml-8 h-2.5 w-2.5"><path d="M7 1h2M4 4h2M7 4h2M1 7h2M4 7h2M7 7h2" stroke="#7d93b5" strokeWidth="2" /></svg>
      </footer>
    </div>
  );
}
